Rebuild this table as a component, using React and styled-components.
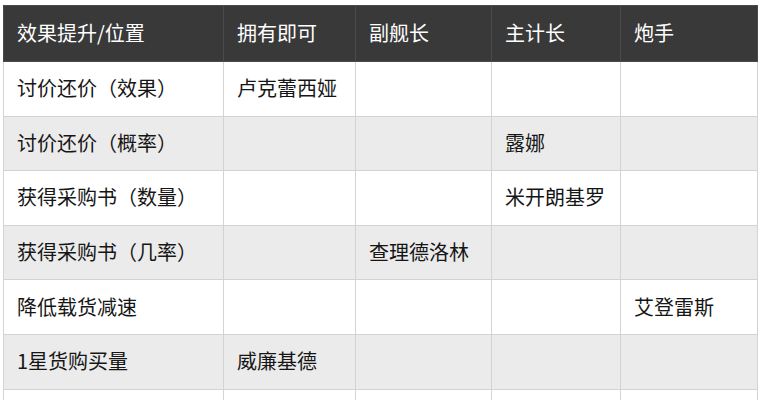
import React from "react";
import styled, { createGlobalStyle } from "styled-components";

const GlobalStyle = createGlobalStyle`
  body {
    margin: 0;
    background: #fff;
    font-family: "Noto Sans CJK SC", "Noto Sans", sans-serif;
  }
`;

const columns = [
  { title: "效果提升/位置", width: 220 },
  { title: "拥有即可", width: 132 },
  { title: "副舰长", width: 136 },
  { title: "主计长", width: 129 },
  { title: "炮手", width: 137 },
];

const rows = [
  ["讨价还价（效果）", "卢克蕾西娅", "", "", ""],
  ["讨价还价（概率）", "", "", "露娜", ""],
  ["获得采购书（数量）", "", "", "米开朗基罗", ""],
  ["获得采购书（几率）", "", "查理德洛林", "", ""],
  ["降低载货减速", "", "", "", "艾登雷斯"],
  ["1星货购买量", "威廉基德", "", "", ""],
  ["", "", "", "", ""],
];

const Wrapper = styled.div`
  padding: 5px 0 0 3px;
  height: 395px;
  overflow: hidden;
`;

const Table = styled.table`
  border-collapse: collapse;
  table-layout: fixed;
  width: 754px;
`;

const HeadCell = styled.th`
  height: 56px;
  padding: 0 0 2px 13px;
  background: #393939;
  color: #fff;
  font-size: 20px;
  font-weight: 400;
  text-align: left;
  border: 1px solid #4a4a4a;
  box-sizing: border-box;
`;

const Row = styled.tr`
  height: 54.6px;
  background: ${(p) => (p.$striped ? "#ebebeb" : "#fff")};
`;

const Cell = styled.td`
  padding: 0 0 2px 13px;
  color: #161616;
  font-size: 20px;
  border: 1px solid #d3d3d3;
  white-space: nowrap;
  box-sizing: border-box;
`;

export default function App() {
  return (
    <>
      <GlobalStyle />
      <Wrapper>
        <Table>
          <colgroup>
            {columns.map((c) => (
              <col key={c.title} style={{ width: c.width }} />
            ))}
          </colgroup>
          <thead>
            <tr>
              {columns.map((c) => (
                <HeadCell key={c.title}>{c.title}</HeadCell>
              ))}
            </tr>
          </thead>
          <tbody>
            {rows.map((r, i) => (
              <Row key={i} $striped={i % 2 === 1}>
                {r.map((v, j) => (
                  <Cell key={j}>{v}</Cell>
                ))}
              </Row>
            ))}
          </tbody>
        </Table>
      </Wrapper>
    </>
  );
}
